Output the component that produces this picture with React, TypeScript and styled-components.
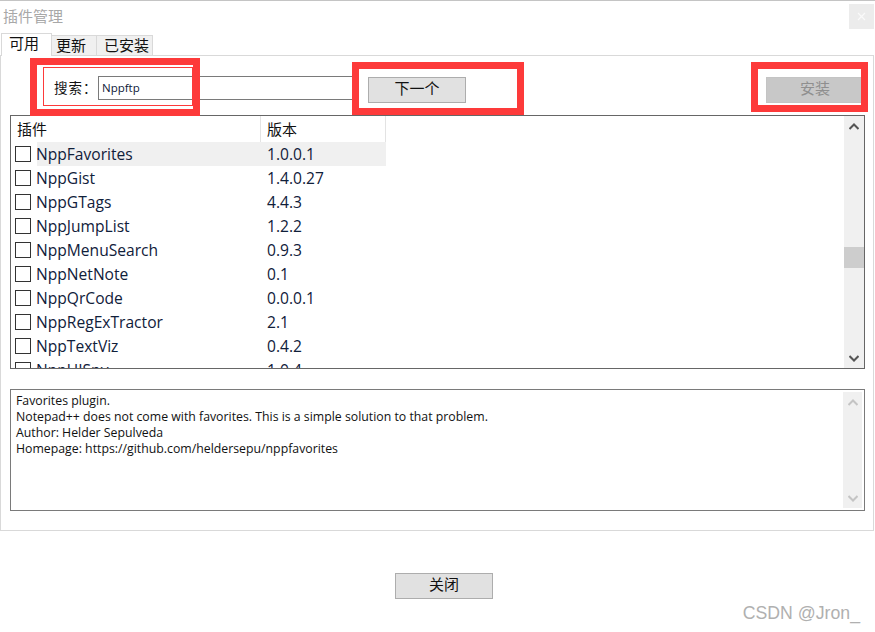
import React from 'react'
import styled, { createGlobalStyle } from 'styled-components'

const cjk = '"Noto Sans CJK SC", "Noto Sans", sans-serif'

const GlobalStyle = createGlobalStyle`
  html, body {
    margin: 0;
    padding: 0;
    background: #fff;
  }
  * {
    box-sizing: border-box;
  }
`

const Page = styled.div`
  position: relative;
  width: 875px;
  height: 632px;
  overflow: hidden;
  background: #fff;
  border-top: 1px solid #c4c4c4;
  font-family: ${cjk};
  color: #111;
`

const TitleBar = styled.div`
  display: flex;
  align-items: center;
  justify-content: space-between;
  height: 32px;
  padding: 2px 1px 3px 3px;
`

const Title = styled.span`
  font-size: 15px;
  line-height: 20px;
  margin-top: -2px;
  color: #a8a8a8;
`

const CloseBox = styled.div`
  display: flex;
  align-items: center;
  justify-content: center;
  width: 25px;
  height: 25px;
  background: #ececec;
  color: #fafafa;
`

const TabRow = styled.div`
  display: flex;
  align-items: flex-end;
  height: 23px;
  padding-left: 1px;
  position: relative;
  z-index: 1;
`

const Tab = styled.div<{ $active?: boolean; $width: number; $pad: number }>`
  display: flex;
  align-items: center;
  width: ${(p) => p.$width}px;
  height: ${(p) => (p.$active ? 23 : 21)}px;
  padding-left: ${(p) => p.$pad}px;
  padding-bottom: ${(p) => (p.$active ? 5 : 2)}px;
  font-size: 15px;
  line-height: 1;
  background: ${(p) => (p.$active ? '#fff' : '#f0f0f0')};
  border: 1px solid #d9d9d9;
  border-bottom: ${(p) => (p.$active ? 'none' : '1px solid #d9d9d9')};
  border-left: ${(p) => (p.$active ? '1px solid #d9d9d9' : 'none')};
`

const Panel = styled.div`
  display: flex;
  flex-direction: column;
  width: 874px;
  height: 476px;
  margin-top: -1px;
  padding: 0 8px 0 9px;
  border: 1px solid #d9d9d9;
`

const Toolbar = styled.div`
  display: flex;
  align-items: flex-start;
  justify-content: space-between;
  height: 59px;
  padding: 21px 1px 0 0;
`

const SearchGroup = styled.div`
  display: flex;
  align-items: flex-start;
  padding-left: 44px;
`

const SearchLabel = styled.label`
  width: 44px;
  height: 24px;
  margin-top: -1px;
  display: flex;
  align-items: center;
  font-size: 13.5px;
  letter-spacing: 1px;
  line-height: 1;
`

const SearchInput = styled.div`
  display: flex;
  align-items: center;
  width: 258px;
  height: 24px;
  margin-top: -1px;
  padding: 0 0 2px 3px;
  border: 1px solid #7a7a7a;
  font-family: "Open Sans", sans-serif;
  font-size: 11.5px;
  color: #10203a;
`

const Button = styled.button<{ $disabled?: boolean }>`
  display: block;
  width: 98px;
  height: 26px;
  padding: 0 0 6px;
  font-family: ${cjk};
  font-size: 15px;
  line-height: 1;
  color: ${(p) => (p.$disabled ? '#8f8f8f' : '#111')};
  background: ${(p) => (p.$disabled ? '#c8c8c8' : '#e1e1e1')};
  border: 1px solid ${(p) => (p.$disabled ? '#c4c4c4' : '#adadad')};
`

const NextButton = styled(Button)`
  margin-left: 12px;
`

const ListBox = styled.div`
  display: flex;
  height: 254px;
  border: 1px solid #666;
  overflow: hidden;
`

const ListBody = styled.div`
  flex: 1;
  overflow: hidden;
`

const HeaderRow = styled.div`
  display: flex;
  height: 26px;
`

const HeaderCell = styled.div<{ $width: number; $pad: number }>`
  display: flex;
  align-items: center;
  width: ${(p) => p.$width}px;
  padding-left: ${(p) => p.$pad}px;
  padding-bottom: 2px;
  font-size: 15px;
  line-height: 1;
  border-right: 1px solid #e3e3e3;
`

const Row = styled.div`
  display: flex;
  align-items: center;
  height: 24px;
  width: 375px;
  flex-shrink: 0;
`

const Check = styled.span`
  display: block;
  width: 16px;
  height: 16px;
  margin: 0 6px 0 4px;
  border: 1px solid #333;
  background: #fff;
  flex-shrink: 0;
`

const RowMain = styled.div<{ $selected?: boolean }>`
  display: flex;
  align-items: center;
  height: 24px;
  flex: 1;
  background: ${(p) => (p.$selected ? '#f0f0f0' : 'transparent')};
  font-family: "Open Sans", sans-serif;
  font-size: 15.6px;
  color: #10203a;
`

const NameCell = styled.span`
  width: 231px;
  margin-left: -1px;
`

const VersionCell = styled.span`
  font-size: 15.6px;
`

const ScrollTrack = styled.div`
  display: flex;
  flex-direction: column;
  justify-content: space-between;
  align-items: center;
  position: relative;
  width: 20px;
  margin: 0;
  background: #f0f0f0;
`

const ScrollThumb = styled.div`
  position: absolute;
  top: 131px;
  left: 0;
  width: 100%;
  height: 21px;
  background: #cdcdcd;
`

const ArrowCell = styled.div<{ $faded?: boolean }>`
  display: flex;
  align-items: center;
  justify-content: center;
  width: 100%;
  height: 20px;
  color: ${(p) => (p.$faded ? '#c4c4c4' : '#555')};
`

const DescBox = styled.div`
  display: flex;
  height: 122px;
  margin-top: 20px;
  padding: 2px 2px 2px 0;
  border: 1px solid #7a7a7a;
`

const DescText = styled.div`
  flex: 1;
  padding: 1px 0 0 5px;
  font-family: "Open Sans", sans-serif;
  font-size: 12.3px;
  line-height: 16px;
  color: #111;
`

const DescTrack = styled(ScrollTrack)`
  width: 19px;
`

const Footer = styled.div`
  display: flex;
  justify-content: center;
  padding: 42px 0 0 13px;
`

const Watermark = styled.div`
  position: absolute;
  right: 15px;
  top: 600px;
  font-family: "Liberation Sans", sans-serif;
  font-size: 17.7px;
  line-height: 24px;
  color: #b0b0b0;
`

const Callout = styled.div<{ $x: number; $y: number; $w: number; $h: number }>`
  position: absolute;
  left: ${(p) => p.$x}px;
  top: ${(p) => p.$y}px;
  width: ${(p) => p.$w}px;
  height: ${(p) => p.$h}px;
  border: 7px solid #fd3a3a;
  pointer-events: none;
`

const ThinCallout = styled(Callout)`
  border-width: 1px;
`

const Chevron: React.FC<{ up?: boolean }> = ({ up }) => (
  <svg width="10" height="7" viewBox="0 0 10 7">
    <path d={up ? 'M0.5 6 L5 1.5 L9.5 6' : 'M0.5 1 L5 5.5 L9.5 1'} fill="none" stroke="currentColor" strokeWidth="2" />
  </svg>
)

const plugins = [
  ['NppFavorites', '1.0.0.1'],
  ['NppGist', '1.4.0.27'],
  ['NppGTags', '4.4.3'],
  ['NppJumpList', '1.2.2'],
  ['NppMenuSearch', '0.9.3'],
  ['NppNetNote', '0.1'],
  ['NppQrCode', '0.0.0.1'],
  ['NppRegExTractor', '2.1'],
  ['NppTextViz', '0.4.2'],
  ['NppUISpy', '1.0.4'],
]

const App: React.FC = () => (
  <Page>
    <GlobalStyle />
    <TitleBar>
      <Title>插件管理</Title>
      <CloseBox>
        <svg width="9" height="9" viewBox="0 0 9 9">
          <path d="M1 1 L8 8 M8 1 L1 8" stroke="currentColor" strokeWidth="1.2" />
        </svg>
      </CloseBox>
    </TitleBar>
    <TabRow>
      <Tab $active $width={51} $pad={7}>可用</Tab>
      <Tab $width={45} $pad={4}>更新</Tab>
      <Tab $width={56} $pad={7}>已安装</Tab>
    </TabRow>
    <Panel>
      <Toolbar>
        <SearchGroup>
          <SearchLabel>搜索：</SearchLabel>
          <SearchInput>Nppftp</SearchInput>
          <NextButton>下一个</NextButton>
        </SearchGroup>
        <Button $disabled>安装</Button>
      </Toolbar>
      <ListBox>
        <ListBody>
          <HeaderRow>
            <HeaderCell $width={250} $pad={6}>插件</HeaderCell>
            <HeaderCell $width={125} $pad={6}>版本</HeaderCell>
          </HeaderRow>
          {plugins.map(([name, version], i) => (
            <Row key={name}>
              <Check />
              <RowMain $selected={i === 0}>
                <NameCell>{name}</NameCell>
                <VersionCell>{version}</VersionCell>
              </RowMain>
            </Row>
          ))}
        </ListBody>
        <ScrollTrack>
          <ArrowCell><Chevron up /></ArrowCell>
          <ScrollThumb />
          <ArrowCell><Chevron /></ArrowCell>
        </ScrollTrack>
      </ListBox>
      <DescBox>
        <DescText>
          Favorites plugin.
          <br />
          Notepad++ does not come with favorites. This is a simple solution to that problem.
          <br />
          Author: Helder Sepulveda
          <br />
          Homepage: https://github.com/heldersepu/nppfavorites
        </DescText>
        <DescTrack>
          <ArrowCell $faded><Chevron up /></ArrowCell>
          <ArrowCell $faded><Chevron /></ArrowCell>
        </DescTrack>
      </DescBox>
    </Panel>
    <Footer>
      <Button>关闭</Button>
    </Footer>
    <Watermark>CSDN @Jron_</Watermark>
    <Callout $x={30} $y={57} $w={170} $h={58} />
    <ThinCallout $x={43} $y={66} $w={150} $h={39} />
    <Callout $x={352} $y={61} $w={172} $h={53} />
    <Callout $x={751} $y={61} $w={117} $h={50} />
  </Page>
)

export default App
